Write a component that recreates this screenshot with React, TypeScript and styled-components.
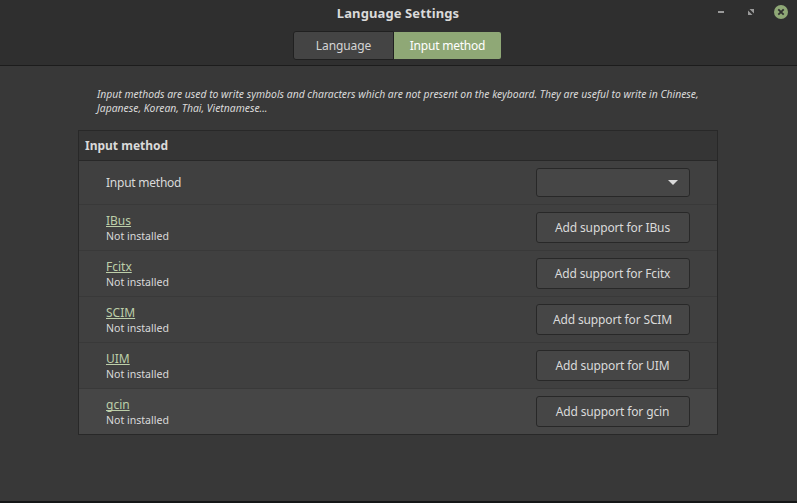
import React from "react";
import styled, { createGlobalStyle } from "styled-components";

const GlobalStyle = createGlobalStyle`
  html, body { margin: 0; padding: 0; background: #383838; }
  * { box-sizing: border-box; }
`;

const Window = styled.div`
  display: flex;
  flex-direction: column;
  width: 797px;
  height: 503px;
  overflow: hidden;
  background: #383838;
  border-bottom: 2px solid #151617;
  color: #dadada;
  font: 12px/16px "Noto Sans", sans-serif;
`;

const Header = styled.header`
  flex: none;
  height: 66px;
  background: #2f2f2f;
  border-bottom: 1px solid #1c1c1c;
`;

const TitleBar = styled.div`
  display: grid;
  grid-template-columns: 1fr auto 1fr;
  align-items: center;
  height: 24px;
  margin-bottom: 7px;
  padding: 0 9px 0 8px;
`;

const Title = styled.h1`
  grid-column: 2;
  margin: 0;
  padding-top: 2px;
  font-size: 13px;
  line-height: 18px;
  font-weight: 700;
  letter-spacing: 0.1px;
`;

const Controls = styled.div`
  display: flex;
  justify-content: flex-end;
  gap: 16px;
  height: 20px;
  align-items: center;

  svg { display: block; }
`;

const Tabs = styled.div`
  display: flex;
  justify-content: center;
  padding-right: 3px;
`;

const Tab = styled.button<{ $active?: boolean; $width: number }>`
  width: ${(p) => p.$width}px;
  height: ${(p) => (p.$active ? 27 : 29)}px;
  margin: ${(p) => (p.$active ? "1px 0" : "0")};
  padding: 0;
  border: ${(p) => (p.$active ? "0" : "1px solid #202020")};
  border-radius: ${(p) => (p.$active ? "0 2px 2px 0" : "3px 0 0 3px")};
  background: ${(p) => (p.$active ? "#8fa876" : "#444444")};
  color: ${(p) => (p.$active ? "#ffffff" : "#d4d4d4")};
  font: 12px/16px "Noto Sans", sans-serif;
  letter-spacing: ${(p) => (p.$active ? "-0.22px" : "-0.1px")};
`;

const Content = styled.main`
  width: 640px;
  margin: 21px 0 0 78px;
`;

const Description = styled.p`
  margin: 0 0 15px;
  padding-left: 19px;
  font-size: 10.37px;
  line-height: 14px;
  font-style: italic;
  white-space: nowrap;
`;

const Panel = styled.section`
  border: 1px solid #282828;
  background: #404040;
`;

const PanelHeading = styled.h2`
  height: 30px;
  margin: 0;
  padding-left: 6px;
  border-bottom: 1px solid #282828;
  background: #353535;
  font-size: 12px;
  line-height: 29px;
  font-weight: 700;
`;

const Row = styled.div<{ $height?: number; $hover?: boolean }>`
  display: flex;
  align-items: center;
  justify-content: space-between;
  height: ${(p) => p.$height ?? 46}px;
  padding: 0 27px;
  border-bottom: 1px solid #393939;
  background: ${(p) => (p.$hover ? "#464646" : "#404040")};

  &:last-child { height: 45px; border-bottom: 0; }
`;

const Label = styled.span`
  letter-spacing: -0.24px;
`;

const Method = styled.div`
  display: flex;
  flex-direction: column;
  align-items: flex-start;
`;

const MethodLink = styled.a`
  color: #bdcfa9;
  text-decoration: underline;
  text-decoration-thickness: 1px;
  text-underline-offset: 1px;
  text-decoration-skip-ink: none;
`;

const Status = styled.span`
  font-size: 10.57px;
  line-height: 14px;
`;

const ActionButton = styled.button`
  width: 154px;
  height: 31px;
  padding: 0 1px 0 0;
  border: 1px solid #282828;
  border-radius: 3px;
  background: #464646;
  color: #dadada;
  font: 12px/16px "Noto Sans", sans-serif;
  letter-spacing: -0.13px;
`;

const Combo = styled(ActionButton)`
  display: flex;
  align-items: center;
  justify-content: flex-end;
  height: 29px;
  padding-right: 11px;
`;

const methods = ["IBus", "Fcitx", "SCIM", "UIM", "gcin"];

export default function App() {
  return (
    <Window>
      <GlobalStyle />
      <Header>
        <TitleBar>
          <Title>Language Settings</Title>
          <Controls>
            <svg width="14" height="14">
              <path d="M4 6h6v2H4z" fill="#9a9a9a" />
            </svg>
            <svg width="14" height="14">
              <path d="M5.5 4H10v4.5zM4 5.5L8.5 10H4z" fill="#9a9a9a" />
            </svg>
            <svg width="14" height="14">
              <circle cx="7" cy="7" r="7" fill="#8fa876" />
              <path d="M4.3 4.3l5.4 5.4M9.7 4.3l-5.4 5.4" stroke="#2f2f2f" strokeWidth="1.8" />
            </svg>
          </Controls>
        </TitleBar>
        <Tabs>
          <Tab $width={101}>Language</Tab>
          <Tab $width={107} $active>Input method</Tab>
        </Tabs>
      </Header>
      <Content>
        <Description>
          Input methods are used to write symbols and characters which are not present on the keyboard. They are useful to write in Chinese,
          <br />
          Japanese, Korean, Thai, Vietnamese...
        </Description>
        <Panel>
          <PanelHeading>Input method</PanelHeading>
          <Row $height={44}>
            <Label>Input method</Label>
            <Combo aria-label="Input method">
              <svg width="10" height="5">
                <path d="M0 0h10L5 5z" fill="#dadada" />
              </svg>
            </Combo>
          </Row>
          {methods.map((name) => (
            <Row key={name} $hover={name === "gcin"}>
              <Method>
                <MethodLink>{name}</MethodLink>
                <Status>Not installed</Status>
              </Method>
              <ActionButton>Add support for {name}</ActionButton>
            </Row>
          ))}
        </Panel>
      </Content>
    </Window>
  );
}
